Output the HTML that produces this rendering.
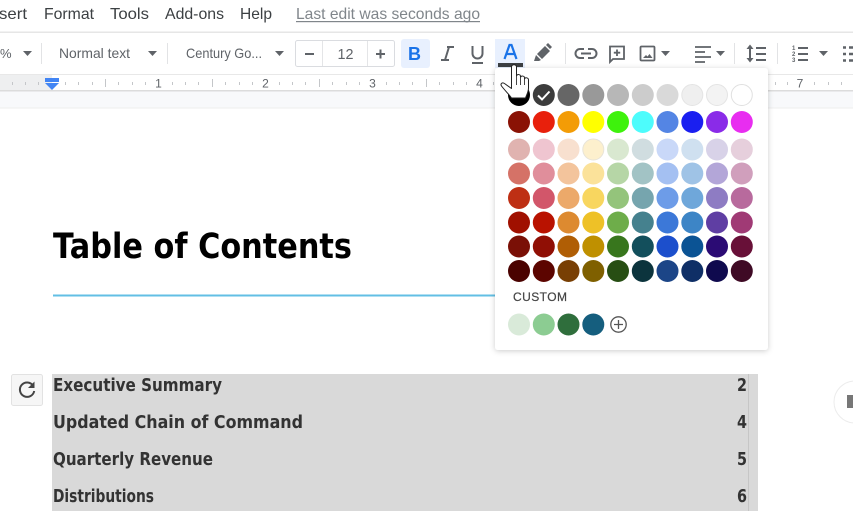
<!DOCTYPE html>
<html><head><meta charset="utf-8"><style>
html,body{margin:0;padding:0;background:#fff;width:853px;height:511px;overflow:hidden}
svg{display:block;position:absolute;left:0;top:0}
text{font-family:"Liberation Sans",sans-serif}
text.g{font-family:"DejaVu Sans",sans-serif;font-weight:700}
</style></head><body>
<svg width="853" height="511" viewBox="0 0 853 511" xmlns="http://www.w3.org/2000/svg">
<defs><filter id="sh" x="-10%" y="-10%" width="120%" height="120%"><feDropShadow dx="0" dy="1" stdDeviation="3" flood-color="#000" flood-opacity=".2"/></filter></defs>
<rect width="853" height="511" fill="#fff"/>
<!-- menu -->
<g font-size="16" fill="#3c4043">
<text x="-1" y="19" textLength="28" lengthAdjust="spacingAndGlyphs">sert</text>
<text x="44" y="19" textLength="50" lengthAdjust="spacingAndGlyphs">Format</text>
<text x="110" y="19" textLength="39" lengthAdjust="spacingAndGlyphs">Tools</text>
<text x="165" y="19" textLength="59" lengthAdjust="spacingAndGlyphs">Add-ons</text>
<text x="240" y="19" textLength="32" lengthAdjust="spacingAndGlyphs">Help</text>
<text x="296" y="19" fill="#80868b" textLength="184" lengthAdjust="spacingAndGlyphs">Last edit was seconds ago</text>
</g>
<rect x="296" y="21" width="184" height="1.2" fill="#80868b"/>
<rect x="0" y="31.5" width="853" height="1.5" fill="#e6e6e6"/>
<!-- toolbar -->
<rect x="295.500" y="40.500" width="99" height="26" rx="2" fill="#fff" stroke="#dadce0"/>
<path d="M322.500 41v25M367.500 41v25" stroke="#e4e5e7"/>
<g font-size="14" fill="#5f6368">
<text x="0" y="58" font-size="13">%</text>
<text x="59" y="58" textLength="71" lengthAdjust="spacingAndGlyphs">Normal text</text>
<text x="186" y="58" textLength="76" lengthAdjust="spacingAndGlyphs">Century Go...</text>
<text x="337.500" y="59" font-size="14.500" textLength="16" lengthAdjust="spacingAndGlyphs">12</text>
</g>
<g fill="#5f6368">
<path d="M23 51h9l-4.500 5z"/><path d="M148 51h9l-4.500 5z"/><path d="M275 51h9l-4.500 5z"/>
<path d="M661 51h9l-4.500 5z"/><path d="M716 51h9l-4.500 5z"/><path d="M819 51h9l-4.500 5z"/>
</g>
<g fill="#e2e3e5"><rect x="41" y="43" width="1" height="21"/><rect x="167" y="43" width="1" height="21"/><rect x="565" y="43" width="1" height="21"/><rect x="734" y="43" width="1" height="21"/><rect x="777" y="43" width="1" height="21"/></g>
<path d="M305 54h9" stroke="#5f6368" stroke-width="2"/>
<path d="M376 54h9M380.500 49.500v9" stroke="#5f6368" stroke-width="2"/>
<rect x="401" y="39" width="29" height="29" rx="3" fill="#e8f0fe"/>
<text x="408" y="60" font-size="18" font-weight="700" fill="#1a73e8">B</text>
<path d="M441 60h8M445 60l4-13M447 47h7" stroke="#5f6368" stroke-width="2" fill="none"/>
<path d="M472.500 46v7.500a5 5 0 0 0 10 0V46M472 63h11" stroke="#5f6368" stroke-width="2" fill="none"/>
<rect x="495" y="39" width="30" height="29" fill="#e8f0fe"/>
<path d="M504.500 59l5-14h2l5 14M506.500 54h8" stroke="#1a73e8" stroke-width="2.200" fill="none"/>
<rect x="498" y="63" width="25" height="4" fill="#3c4043"/>
<!-- highlighter -->
<path d="M537 54l8-8 5 5-8 8zM536 55l5 5-2 1h-5zM546 45l2-2 4 4-2 2z" fill="#5f6368"/>
<!-- link -->
<path d="M584 49h-4a4.500 4.500 0 0 0 0 9h4M588 49h4a4.500 4.500 0 0 1 0 9h-4M581 53.500h10" stroke="#5f6368" stroke-width="2" fill="none"/>
<!-- comment -->
<path d="M610 46.500h14v12.500h-11l-3 3zM617 49.500v6.500M613.800 52.700h6.400" stroke="#5f6368" stroke-width="1.800" fill="none"/>
<!-- image -->
<rect x="640.500" y="46.500" width="14" height="14" rx="1" fill="none" stroke="#5f6368" stroke-width="1.800"/>
<path d="M643 58l3-3 1.500 1.500 2-2.500 3 4z" fill="#5f6368"/>
<!-- align -->
<path d="M695 47h16M695 52h10M695 57h16M695 62h10" stroke="#5f6368" stroke-width="1.800"/>
<!-- spacing -->
<path d="M750 47v13" stroke="#5f6368" stroke-width="2"/><path d="M746.500 49l3.500-4.500 3.500 4.500zM746.500 58l3.500 4.500 3.500-4.500z" fill="#5f6368"/>
<path d="M756 48h10M756 54h10M756 60h10" stroke="#5f6368" stroke-width="2"/>
<!-- list -->
<g font-size="6" fill="#5f6368" font-weight="700"><text x="792" y="50">1</text><text x="792" y="56">2</text><text x="792" y="62">3</text></g>
<path d="M798 48h10M798 54h10M798 60h10" stroke="#5f6368" stroke-width="2"/>
<path d="M843 47.500h3M843 54h3M843 60.500h3M849 47.500h4M849 54h4M849 60.500h4" stroke="#5f6368" stroke-width="2.500"/>
<!-- ruler -->
<rect x="0" y="74" width="853" height="1" fill="#e8e8e8"/>
<rect x="0" y="75" width="853" height="16" fill="#fff"/>
<rect x="0" y="75" width="52" height="16" fill="#eeeff0"/>
<rect x="0" y="90" width="853" height="1.500" fill="#dcdcdc"/>
<rect x="0" y="91.500" width="853" height="16" fill="#f8f9fb"/>
<rect x="0" y="107.500" width="853" height="1" fill="#eeeeee"/>
<g fill="#c4c6c9">
<rect x="12" y="82" width="1" height="3"/><rect x="25" y="82" width="1" height="3"/><rect x="38" y="82" width="1" height="3"/>
<rect x="65" y="82" width="1" height="3"/><rect x="78" y="82" width="1" height="3"/><rect x="92" y="82" width="1" height="3"/><rect x="105" y="79" width="1" height="8"/><rect x="118" y="82" width="1" height="3"/><rect x="132" y="82" width="1" height="3"/><rect x="145" y="82" width="1" height="3"/>
<rect x="172" y="82" width="1" height="3"/><rect x="185" y="82" width="1" height="3"/><rect x="198" y="82" width="1" height="3"/><rect x="212" y="79" width="1" height="8"/><rect x="225" y="82" width="1" height="3"/><rect x="239" y="82" width="1" height="3"/><rect x="252" y="82" width="1" height="3"/>
<rect x="279" y="82" width="1" height="3"/><rect x="292" y="82" width="1" height="3"/><rect x="305" y="82" width="1" height="3"/><rect x="319" y="79" width="1" height="8"/><rect x="332" y="82" width="1" height="3"/><rect x="346" y="82" width="1" height="3"/><rect x="359" y="82" width="1" height="3"/>
<rect x="386" y="82" width="1" height="3"/><rect x="399" y="82" width="1" height="3"/><rect x="412" y="82" width="1" height="3"/><rect x="426" y="79" width="1" height="8"/><rect x="439" y="82" width="1" height="3"/><rect x="453" y="82" width="1" height="3"/><rect x="466" y="82" width="1" height="3"/><rect x="493" y="82" width="1" height="3"/>
<rect x="775" y="82" width="1" height="3"/><rect x="787" y="82" width="1" height="3"/><rect x="814" y="82" width="1" height="3"/><rect x="828" y="82" width="1" height="3"/><rect x="841" y="82" width="1" height="3"/>
</g>
<g font-size="12" fill="#5f6368" text-anchor="middle"><text x="158.500" y="87.500">1</text><text x="265.500" y="87.500">2</text><text x="372.500" y="87.500">3</text><text x="479.500" y="87.500">4</text><text x="800" y="87.500">7</text></g>
<rect x="45" y="78" width="14" height="4" fill="#4285f4"/><path d="M45 83h14l-7 7z" fill="#4285f4"/>
<!-- doc -->
<g transform="scale(1,1.08)"><text class="g" x="53" y="238.890" font-size="32" fill="#000" textLength="299" lengthAdjust="spacingAndGlyphs">Table of Contents</text></g>
<rect x="53" y="294.500" width="445" height="2" fill="#62bfe4"/>
<rect x="52" y="374" width="706" height="137" fill="#d9d9d9"/>
<rect x="748" y="374" width="1" height="137" fill="#c6c6c6"/>
<g font-size="16.500" fill="#333" transform="scale(1,1.1)">
<text class="g" x="53" y="355.450" textLength="169" lengthAdjust="spacingAndGlyphs">Executive Summary</text>
<text class="g" x="53" y="389.090" textLength="250" lengthAdjust="spacingAndGlyphs">Updated Chain of Command</text>
<text class="g" x="53" y="422.730" textLength="160" lengthAdjust="spacingAndGlyphs">Quarterly Revenue</text>
<text class="g" x="53" y="456.360" textLength="101" lengthAdjust="spacingAndGlyphs">Distributions</text>
<text class="g" x="737" y="355.450" textLength="10" lengthAdjust="spacingAndGlyphs">2</text><text class="g" x="737" y="389.090" textLength="10" lengthAdjust="spacingAndGlyphs">4</text><text class="g" x="737" y="422.730" textLength="10" lengthAdjust="spacingAndGlyphs">5</text><text class="g" x="737" y="456.360" textLength="10" lengthAdjust="spacingAndGlyphs">6</text>
</g>
<rect x="11.500" y="374.500" width="31" height="31" rx="2" fill="#f6f6f6" stroke="#e2e2e2"/>
<path d="M33 385.500a7.200 7.200 0 1 0 1.200 5.500" fill="none" stroke="#444" stroke-width="2"/>
<path d="M34.500 381.500v6.500h-6.500z" fill="#444"/>
<circle cx="855" cy="402" r="21" fill="#fff" stroke="#ececec"/>
<rect x="847" y="395" width="7" height="13" fill="#777"/>
<!-- palette -->
<rect x="495" y="68" width="273" height="282" rx="3" fill="#fff" filter="url(#sh)"/>
<g>
<circle cx="519" cy="95" r="11" fill="#000"/><circle cx="543.800" cy="95" r="11" fill="#3c3c3c"/><circle cx="568.500" cy="95" r="11" fill="#666"/><circle cx="593.300" cy="95" r="11" fill="#999"/><circle cx="618" cy="95" r="11" fill="#b7b7b7"/><circle cx="642.800" cy="95" r="11" fill="#ccc"/><circle cx="667.500" cy="95" r="11" fill="#d9d9d9"/><circle cx="692.300" cy="95" r="10.500" fill="#efefef" stroke="#e4e4e4"/><circle cx="717" cy="95" r="10.500" fill="#f3f3f3" stroke="#e4e4e4"/><circle cx="741.800" cy="95" r="10.500" fill="#fff" stroke="#e0e0e0"/>
<circle cx="519" cy="122" r="11" fill="#8a1205"/><circle cx="543.800" cy="122" r="11" fill="#e8200c"/><circle cx="568.500" cy="122" r="11" fill="#f39c06"/><circle cx="593.300" cy="122" r="11" fill="#ffff00"/><circle cx="618" cy="122" r="11" fill="#3ef20c"/><circle cx="642.800" cy="122" r="11" fill="#4dfcfc"/><circle cx="667.500" cy="122" r="11" fill="#5485e4"/><circle cx="692.300" cy="122" r="11" fill="#1a1ff0"/><circle cx="717" cy="122" r="11" fill="#8a2be8"/><circle cx="741.800" cy="122" r="11" fill="#e82df0"/>
<circle cx="519" cy="149.500" r="11" fill="#e0b3b0"/><circle cx="543.800" cy="149.500" r="11" fill="#efc5d0"/><circle cx="568.500" cy="149.500" r="11" fill="#f8e0cf"/><circle cx="593.300" cy="149.500" r="10.500" fill="#fdf0cd" stroke="#e8e4d8"/><circle cx="618" cy="149.500" r="11" fill="#d9e8d0"/><circle cx="642.800" cy="149.500" r="11" fill="#d0dde0"/><circle cx="667.500" cy="149.500" r="11" fill="#c9d8f8"/><circle cx="692.300" cy="149.500" r="11" fill="#cfe0f0"/><circle cx="717" cy="149.500" r="11" fill="#d8d2e8"/><circle cx="741.800" cy="149.500" r="11" fill="#e6cfdc"/>
<circle cx="519" cy="173.500" r="11" fill="#d57267"/><circle cx="543.800" cy="173.500" r="11" fill="#e08e9b"/><circle cx="568.500" cy="173.500" r="11" fill="#f3c49c"/><circle cx="593.300" cy="173.500" r="11" fill="#fbe29a"/><circle cx="618" cy="173.500" r="11" fill="#b6d6a6"/><circle cx="642.800" cy="173.500" r="11" fill="#a2c3c5"/><circle cx="667.500" cy="173.500" r="11" fill="#a4c0f2"/><circle cx="692.300" cy="173.500" r="11" fill="#9fc3e6"/><circle cx="717" cy="173.500" r="11" fill="#b3a6d8"/><circle cx="741.800" cy="173.500" r="11" fill="#d09fbc"/>
<circle cx="519" cy="198" r="11" fill="#be2f14"/><circle cx="543.800" cy="198" r="11" fill="#d2566a"/><circle cx="568.500" cy="198" r="11" fill="#eca96a"/><circle cx="593.300" cy="198" r="11" fill="#f8d65f"/><circle cx="618" cy="198" r="11" fill="#94c47b"/><circle cx="642.800" cy="198" r="11" fill="#76a5ae"/><circle cx="667.500" cy="198" r="11" fill="#6d9ce8"/><circle cx="692.300" cy="198" r="11" fill="#6fa7da"/><circle cx="717" cy="198" r="11" fill="#8e7cc3"/><circle cx="741.800" cy="198" r="11" fill="#b86a9d"/>
<circle cx="519" cy="222.500" r="11" fill="#a01000"/><circle cx="543.800" cy="222.500" r="11" fill="#b91200"/><circle cx="568.500" cy="222.500" r="11" fill="#dd8a30"/><circle cx="593.300" cy="222.500" r="11" fill="#eec127"/><circle cx="618" cy="222.500" r="11" fill="#6ead4a"/><circle cx="642.800" cy="222.500" r="11" fill="#45818e"/><circle cx="667.500" cy="222.500" r="11" fill="#3c78d8"/><circle cx="692.300" cy="222.500" r="11" fill="#3d85c6"/><circle cx="717" cy="222.500" r="11" fill="#5f3ea3"/><circle cx="741.800" cy="222.500" r="11" fill="#a03a75"/>
<circle cx="519" cy="246.500" r="11" fill="#7a1006"/><circle cx="543.800" cy="246.500" r="11" fill="#900f05"/><circle cx="568.500" cy="246.500" r="11" fill="#b05e05"/><circle cx="593.300" cy="246.500" r="11" fill="#bf9000"/><circle cx="618" cy="246.500" r="11" fill="#38761d"/><circle cx="642.800" cy="246.500" r="11" fill="#134f5c"/><circle cx="667.500" cy="246.500" r="11" fill="#1c4fcc"/><circle cx="692.300" cy="246.500" r="11" fill="#0b5394"/><circle cx="717" cy="246.500" r="11" fill="#2b0b74"/><circle cx="741.800" cy="246.500" r="11" fill="#681038"/>
<circle cx="519" cy="271" r="11" fill="#4a0200"/><circle cx="543.800" cy="271" r="11" fill="#5c0500"/><circle cx="568.500" cy="271" r="11" fill="#783f04"/><circle cx="593.300" cy="271" r="11" fill="#7f6000"/><circle cx="618" cy="271" r="11" fill="#274e13"/><circle cx="642.800" cy="271" r="11" fill="#0c343d"/><circle cx="667.500" cy="271" r="11" fill="#1c4587"/><circle cx="692.300" cy="271" r="11" fill="#0f2f66"/><circle cx="717" cy="271" r="11" fill="#0f0a4e"/><circle cx="741.800" cy="271" r="11" fill="#3f0a25"/>
</g>
<path d="M538 95.500l4 4 7.500-8" fill="none" stroke="#fff" stroke-width="2"/>
<text x="513" y="301" font-size="12" fill="#444" textLength="54" lengthAdjust="spacing" stroke="#444" stroke-width=".2">CUSTOM</text>
<circle cx="519" cy="324.500" r="11" fill="#d9ead9"/><circle cx="543.800" cy="324.500" r="11" fill="#8ccc92"/><circle cx="568.500" cy="324.500" r="11" fill="#2f6e3c"/><circle cx="593.300" cy="324.500" r="11" fill="#155e7e"/>
<circle cx="618.500" cy="324.500" r="7.700" fill="none" stroke="#555" stroke-width="1.300"/><path d="M618.500 320v9M614 324.500h9" stroke="#555" stroke-width="1.300"/>
<!-- cursor -->
<path d="M511.500 67c0-3 5-3 5 0v9c.5-2 4-2 4 .5v1c.5-2 4-2 4 .5v1c.5-2 4-1.500 4 1v8c0 4-2 7-3 10h-14c-2-3-7-8-10-12-1.500-2.500 1-4 3-2.500l7 5z" fill="#fff" stroke="#222" stroke-width="1" stroke-linejoin="round"/>
<path d="M516.500 76v9M520.500 78v7M524.500 79v6" stroke="#333" stroke-width=".9"/>
</svg>
</body></html>
